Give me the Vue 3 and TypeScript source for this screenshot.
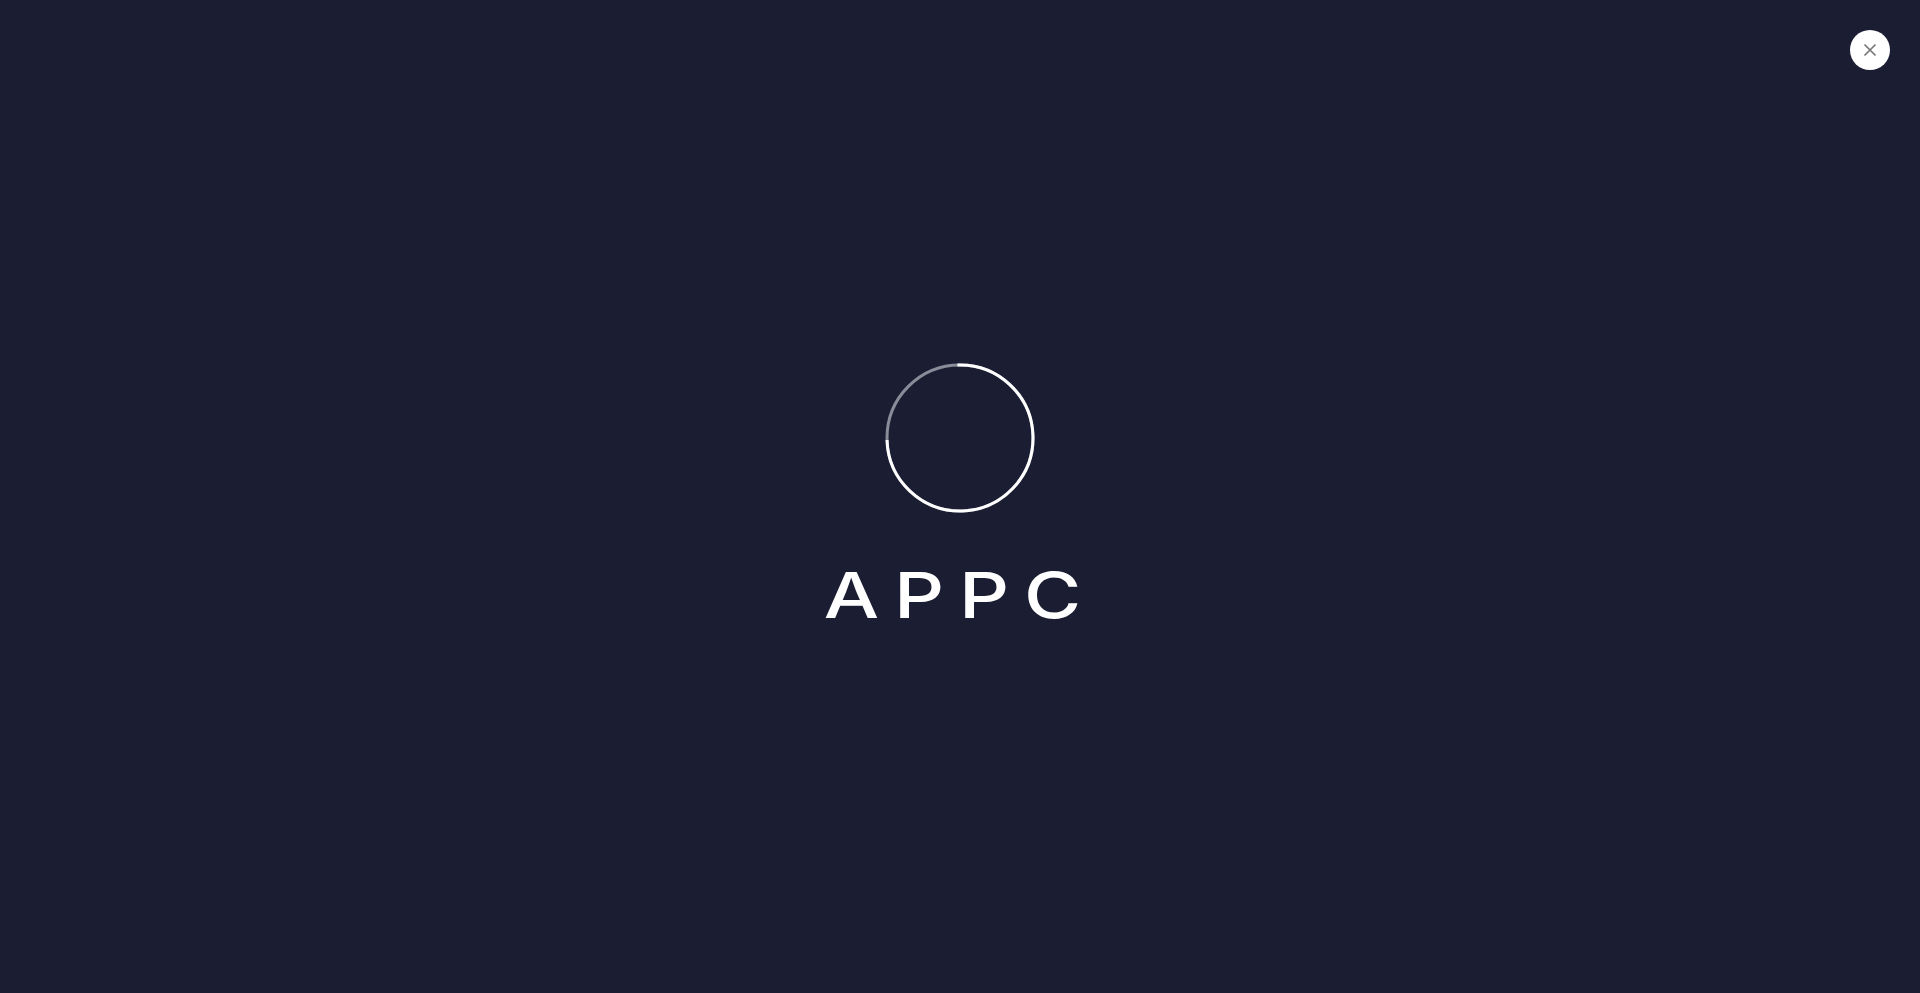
<script setup lang="ts">
const radius = 73
const circumference = 2 * Math.PI * radius
const solidArc = `${circumference * 0.75} ${circumference}`
</script>

<template>
  <div class="splash">
    <button class="close" type="button" aria-label="Close">
      <svg viewBox="0 0 14 14" width="14" height="14">
        <path d="M1.5 1.5 12.5 12.5M12.5 1.5 1.5 12.5" fill="none" stroke="#777" stroke-width="1.7" />
      </svg>
    </button>
    <div class="content">
      <svg class="ring" viewBox="0 0 150 150">
        <circle class="ring__track" cx="75" cy="75" :r="radius" />
        <circle class="ring__arc" cx="75" cy="75" :r="radius" :stroke-dasharray="solidArc" />
      </svg>
      <p class="title">APPC</p>
    </div>
  </div>
</template>

<style scoped>
.splash {
  position: relative;
  display: flex;
  align-items: center;
  justify-content: center;
  height: 993px;
  overflow: hidden;
  background: #1b1e32;
}
.close {
  position: absolute;
  top: 30px;
  right: 30px;
  display: flex;
  align-items: center;
  justify-content: center;
  width: 40px;
  height: 40px;
  padding: 0;
  border: none;
  border-radius: 50%;
  background: #fff;
}
.content {
  display: flex;
  flex-direction: column;
  align-items: center;
  margin-top: -4px;
}
.ring {
  display: block;
  width: 150px;
  height: 150px;
}
.ring__track,
.ring__arc {
  fill: none;
  stroke-width: 3;
}
.ring__track {
  stroke: #8a8c99;
}
.ring__arc {
  stroke: #fff;
  transform: rotate(-92deg);
  transform-origin: 75px 75px;
}
.title {
  margin: 50px 0 0;
  font-family: Inter, "Liberation Sans", sans-serif;
  font-size: 63px;
  font-weight: 550;
  line-height: 64px;
  letter-spacing: 12px;
  color: #fff;
  transform: scaleX(1.24);
}
</style>
